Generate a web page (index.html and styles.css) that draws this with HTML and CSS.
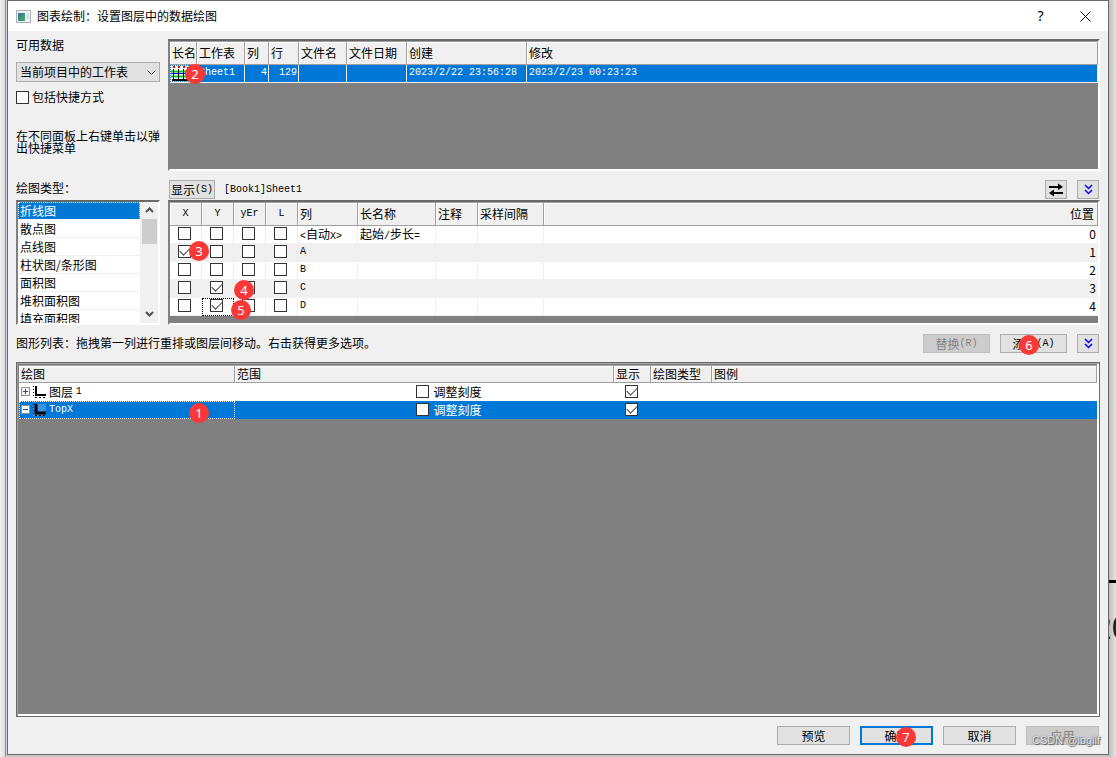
FILE: index.html
```html
<!DOCTYPE html>
<html lang="zh-CN">
<head>
<meta charset="utf-8">
<title>图表绘制：设置图层中的数据绘图</title>
<link rel="stylesheet" href="styles.css">
</head>
<body>
<div class="page-tick" aria-hidden="true"></div>
<div class="page-number" aria-hidden="true">20</div>
<main class="dialog">
  <header class="titlebar">
    <svg class="app-icon" width="15" height="13" viewBox="0 0 15 13"><defs><linearGradient id="g" x1="0" y1="0" x2="1" y2="1"><stop offset="0" stop-color="#3a6a9c"/><stop offset="1" stop-color="#45b26b"/></linearGradient></defs><rect x=".5" y=".5" width="14" height="12" fill="#eef1f4" stroke="#a9b3bb"/><rect x="2" y="3" width="7" height="8" fill="url(#g)"/><path d="M11 4h2M11 6h2M11 8h2" stroke="#bcc4ca"/></svg>
    <h1 class="title">图表绘制：设置图层中的数据绘图</h1>
    <button class="caption-btn" aria-label="帮助">?</button>
    <button class="caption-btn" aria-label="关闭"><svg width="11" height="11" viewBox="0 0 11 11"><path d="M.5 .5l10 10M10.5 .5l-10 10" stroke="#000" fill="none"/></svg></button>
  </header>
  <div class="content">
    <div class="grid">
      <section class="source">
        <label class="source-label" for="src">可用数据</label>
        <div class="combo">
          <select id="src" class="combo-select"><option>当前项目中的工作表</option></select>
          <svg class="combo-arrow" width="9" height="6" viewBox="0 0 9 6"><path d="M.5 .5l4 4 4-4" stroke="#555" fill="none"/></svg>
        </div>
        <label class="check-label"><input type="checkbox" class="check">包括快捷方式</label>
        <p class="hint">在不同面板上右键单击以弹出快捷菜单</p>
      </section>
      <section class="panel sheets">
        <table class="table">
          <colgroup><col class="w27"><col class="w48"><col class="w24"><col class="w30"><col class="w48"><col class="w60"><col class="w120"><col></colgroup>
          <thead><tr><th>长名</th><th>工作表</th><th>列</th><th>行</th><th>文件名</th><th>文件日期</th><th>创建</th><th>修改</th></tr></thead>
          <tbody><tr class="selected">
            <td class="icon-cell"><svg width="19" height="17" viewBox="0 0 19 17"><rect width="19" height="17" fill="#fff"/><path d="M2 15h17M18 2v14" stroke="#000" stroke-width="2"/><path d="M4 1v2M9 1v2M14 1v2" stroke="#e00" stroke-width="2"/><path d="M1 8.500h17" stroke="#00c"/><path d="M1 6.500h15M1 11.500h15" stroke="#00d020" stroke-width="2"/><path d="M3.500 4v10M8.500 4v10M13.500 4v10" stroke="#000"/><path d="M0 .5h19M0 16.500h19M.5 0v17" stroke="#0078d7" stroke-dasharray="1 1"/></svg><span class="badge badge-sheet">2</span></td>
            <td class="mono">Sheet1</td><td class="mono right">4</td><td class="mono right">129</td><td></td><td></td><td class="mono">2023/2/22 23:56:28</td><td class="mono">2023/2/23 00:23:23</td>
          </tr></tbody>
        </table>
      </section>
      <label class="type-label" for="types">绘图类型：</label>
      <div class="toolbar">
        <button class="btn btn-show">显示<span class="mono">(S)</span></button>
        <span class="mono path">[Book1]Sheet1</span>
        <button class="btn btn-icon" aria-label="交换"><svg width="16" height="14" viewBox="0 0 16 14"><path d="M1 3h9V.5L15 4l-5 3V5H1zM15 9H6V6.500L1 10l5 3.500V11h9z" fill="#000"/></svg></button>
        <button class="btn btn-icon" aria-label="展开"><svg width="9" height="11" viewBox="0 0 9 11"><path d="M1 1l3.500 3.500L8 1M1 6l3.500 3.500L8 6" stroke="#00f" stroke-width="1.500" fill="none"/></svg></button>
      </div>
      <div class="panel listbox">
        <select id="types" class="types" size="7">
          <option selected>折线图</option><option>散点图</option><option>点线图</option><option>柱状图/条形图</option><option>面积图</option><option>堆积面积图</option><option>填充面积图</option>
        </select>
        <div class="scrollbar">
          <svg width="9" height="16" viewBox="0 0 9 16"><path d="M1 10l3.500-3.500L8 10" stroke="#505050" stroke-width="2" fill="none"/></svg>
          <div class="thumb"></div>
          <svg width="9" height="17" viewBox="0 0 9 17"><path d="M1 6l3.500 3.500L8 6" stroke="#505050" stroke-width="2" fill="none"/></svg>
        </div>
      </div>
      <section class="panel columns">
        <table class="table striped">
          <colgroup><col class="w32"><col class="w32"><col class="w32"><col class="w32"><col class="w60"><col class="w78"><col class="w42"><col class="w66"><col></colgroup>
          <thead><tr><th class="mono center">X</th><th class="mono center">Y</th><th class="mono center">yEr</th><th class="mono center">L</th><th>列</th><th>长名称</th><th>注释</th><th>采样间隔</th><th class="right">位置</th></tr></thead>
          <tbody>
            <tr><td><input type="checkbox" class="check" aria-label="X 0"></td><td><input type="checkbox" class="check" aria-label="Y 0"></td><td><input type="checkbox" class="check" aria-label="yEr 0"></td><td><input type="checkbox" class="check" aria-label="L 0"></td><td><span class="mono">&lt;</span>自动<span class="mono">X&gt;</span></td><td>起始<span class="mono">/</span>步长<span class="mono">=</span></td><td></td><td></td><td class="right">0</td></tr>
            <tr><td><input type="checkbox" class="check" aria-label="X A" checked><span class="badge badge-x">3</span></td><td><input type="checkbox" class="check" aria-label="Y A"></td><td><input type="checkbox" class="check" aria-label="yEr A"></td><td><input type="checkbox" class="check" aria-label="L A"></td><td class="mono">A</td><td></td><td></td><td></td><td class="right">1</td></tr>
            <tr><td><input type="checkbox" class="check" aria-label="X B"></td><td><input type="checkbox" class="check" aria-label="Y B"></td><td><input type="checkbox" class="check" aria-label="yEr B"></td><td><input type="checkbox" class="check" aria-label="L B"></td><td class="mono">B</td><td></td><td></td><td></td><td class="right">2</td></tr>
            <tr><td><input type="checkbox" class="check" aria-label="X C"></td><td><input type="checkbox" class="check" aria-label="Y C" checked></td><td><input type="checkbox" class="check" aria-label="yEr C"><span class="badge badge-yc">4</span></td><td><input type="checkbox" class="check" aria-label="L C"></td><td class="mono">C</td><td></td><td></td><td></td><td class="right">3</td></tr>
            <tr><td><input type="checkbox" class="check" aria-label="X D"></td><td class="focus-dark"><input type="checkbox" class="check" aria-label="Y D" checked></td><td><input type="checkbox" class="check" aria-label="yEr D"><span class="badge badge-yd">5</span></td><td><input type="checkbox" class="check" aria-label="L D"></td><td class="mono">D</td><td></td><td></td><td></td><td class="right">4</td></tr>
          </tbody>
        </table>
      </section>
    </div>
    <div class="listbar">
      <p class="listbar-text">图形列表：拖拽第一列进行重排或图层间移动。右击获得更多选项。</p>
      <button class="btn btn-mid" disabled>替换<span class="mono">(R)</span></button>
      <button class="btn btn-mid">添加<span class="mono">(A)</span><span class="badge badge-add">6</span></button>
      <button class="btn btn-icon" aria-label="收起"><svg width="9" height="11" viewBox="0 0 9 11"><path d="M1 1l3.500 3.500L8 1M1 6l3.500 3.500L8 6" stroke="#00f" stroke-width="1.500" fill="none"/></svg></button>
    </div>
    <section class="panel plots">
      <table class="table tree">
        <colgroup><col class="w216"><col class="w379"><col class="w37"><col class="w61"><col></colgroup>
        <thead><tr><th>绘图</th><th>范围</th><th>显示</th><th>绘图类型</th><th>图例</th></tr></thead>
        <tbody>
          <tr>
            <td><div class="node"><button class="toggle" aria-label="展开图层 1"><svg width="9" height="9" viewBox="0 0 9 9"><rect x=".5" y=".5" width="8" height="8" fill="#f6f6f6" stroke="#919191"/><path d="M2 4.500h5M4.500 2v5" stroke="#2c4a9c"/></svg></button><svg class="layer-icon" width="13" height="12" viewBox="0 0 13 12"><path d="M.5 0v12" stroke="#000" stroke-dasharray="1 2"/><path d="M3 0v9h10" stroke="#000" stroke-width="2" fill="none"/><path d="M2 11.500h11" stroke="#000" stroke-dasharray="2 2"/></svg>图层&nbsp;<span class="mono">1</span></div></td>
            <td><label class="scale"><input type="checkbox" class="check">调整刻度</label></td><td><input type="checkbox" class="check" aria-label="显示图层 1" checked></td><td></td><td></td>
          </tr>
          <tr class="selected">
            <td class="focus-light"><div class="node"><button class="toggle" aria-label="折叠 TopX"><svg width="9" height="9" viewBox="0 0 9 9"><rect x=".5" y=".5" width="8" height="8" fill="#f6f6f6" stroke="#919191"/><path d="M2 4.500h5" stroke="#2c4a9c"/></svg></button><svg class="layer-icon" width="13" height="12" viewBox="0 0 13 12"><path d="M.5 0v12" stroke="#000" stroke-dasharray="1 2"/><path d="M3 0v9h10" stroke="#000" stroke-width="3" fill="none"/><path d="M2 11.500h11" stroke="#000" stroke-dasharray="2 2"/></svg><span class="mono">TopX</span></div><span class="badge badge-layer">1</span></td>
            <td><label class="scale"><input type="checkbox" class="check">调整刻度</label></td><td><input type="checkbox" class="check" aria-label="显示 TopX" checked></td><td></td><td></td>
          </tr>
        </tbody>
      </table>
    </section>
    <footer class="actions">
      <button class="btn btn-wide">预览</button>
      <button class="btn btn-wide btn-default">确定<span class="badge badge-ok">7</span></button>
      <button class="btn btn-wide">取消</button>
      <button class="btn btn-wide" disabled>应用</button>
      <span class="watermark">CSDN @lbgllf</span>
    </footer>
  </div>
</main>
</body>
</html>
```
FILE: styles.css
```css
* { box-sizing: border-box; }
body {
  margin: 0;
  min-height: 100vh;
  padding: 0 7px 2px;
  display: flex;
  position: relative;
  overflow: hidden;
  background: linear-gradient(90deg, #f0f0f0 0, #dcdcdc 5px, #8a8a90 5px, #8a8a90 6px, #d4d4e0 6px, #d4d4e0 7px, #c6c6c6 7px, #c6c6c6 calc(100% - 7px), #bdbdbd calc(100% - 7px), #e6e6e6 100%);
  font: 12px/16px "Noto Sans CJK SC", "Liberation Sans", sans-serif;
  color: #000;
}
button, select, input { font: inherit; color: inherit; margin: 0; }
p, h1 { margin: 0; font-size: 12px; font-weight: normal; }
svg { display: block; flex: none; }
.mono { font-family: "Liberation Mono", monospace; font-size: 10px; }
span.mono { line-height: 12px; }

.page-tick { position: absolute; right: 0; top: 580px; width: 8px; height: 3px; background: #000; }
.page-number { position: absolute; right: -14px; top: 608px; font: 33px/40px "Liberation Sans", sans-serif; color: #123; }

.dialog {
  flex: 1;
  min-width: 0;
  display: flex;
  flex-direction: column;
  position: relative;
  border: 1px solid #696969;
  background: #f0f0f0;
}
.titlebar { height: 30px; display: flex; align-items: center; padding-left: 8px; background: #fff; }
.title { flex: 1; padding-left: 6px; }
.caption-btn { width: 45px; height: 30px; padding: 0; border: 0; background: none; display: flex; align-items: center; justify-content: center; font: 14px/16px "Noto Sans", sans-serif; }

.content { flex: 1; display: flex; flex-direction: column; padding: 8px 8px 9px; }
.grid { display: grid; grid-template-columns: 144px minmax(0, 1fr); grid-template-rows: 132px 29px 125px; column-gap: 8px; }
.source { display: flex; flex-direction: column; }
.source-label { line-height: 12px; margin-bottom: 11px; }
.combo { position: relative; }
.combo-select { display: block; width: 100%; height: 20px; padding: 0 3px; appearance: none; border: 1px solid #adadad; border-radius: 0; background: #e1e1e1; line-height: 18px; }
.combo-arrow { position: absolute; right: 4px; top: 8px; }
.check-label { display: flex; align-items: center; gap: 3px; margin-top: 7px; }
.hint { margin-top: 25px; line-height: 12px; }
.check { appearance: none; flex: none; display: block; width: 13px; height: 13px; border: 1px solid #333; background: #fff; }
.check:checked::before { content: ""; display: block; width: 9px; height: 5px; margin: 1px; border: solid #444; border-width: 0 0 1px 1px; transform: rotate(-45deg); }

.panel { border: 2px solid; border-color: #696969 #fff #fff #808080; background: #808080; min-width: 0; }
.table { width: 100%; table-layout: fixed; border-collapse: separate; border-spacing: 0; }
.table th { height: 24px; padding: 0 0 0 2px; border-top: 1px solid #a0a0a0; border-right: 1px solid #a0a0a0; border-bottom: 1px solid #a0a0a0; background: #f0f0f0; box-shadow: inset 1px 1px #fff; font-weight: normal; text-align: left; white-space: nowrap; }
.table td { position: relative; height: 18px; padding: 0 0 0 2px; border-right: 1px solid #f0f0f0; border-bottom: 1px solid #f0f0f0; background: #fff; line-height: 16px; vertical-align: top; white-space: nowrap; }
.table .right { text-align: right; padding-right: 3px; }
.table td.right { padding-right: 1px; }
.table .center { text-align: center; padding: 0; }
.table .selected td { background: #0078d7; color: #fff; }
.sheets .icon-cell { padding: 0; }
.striped td .check { margin: 1px 0 0 6px; }
.striped tr:nth-child(even) td { background: #f0f0f0; }
.tree th { height: 18px; line-height: 14px; }
.tree td { border-color: #fff; }
.tree .selected td { border-color: #0078d7; }
.tree td > .check { margin: 2px 0 0 9px; }
.table td.focus-dark { outline: 1px dotted #000; outline-offset: -1px; }
.table td.focus-light { outline: 1px dotted #fff; outline-offset: -1px; }
.node { display: flex; align-items: center; height: 17px; }
.toggle { padding: 0; border: 0; background: none; margin-right: 3px; }
.layer-icon { margin-right: 3px; }
.tree .selected .layer-icon { background: #3b93de; }
.scale { display: flex; align-items: center; justify-content: center; gap: 4px; height: 17px; padding-left: 48px; }

.w24 { width: 24px; } .w27 { width: 27px; } .w30 { width: 30px; } .w32 { width: 32px; }
.w37 { width: 37px; } .w42 { width: 42px; } .w48 { width: 48px; } .w60 { width: 60px; }
.w61 { width: 61px; } .w66 { width: 66px; } .w78 { width: 78px; } .w120 { width: 120px; }
.w216 { width: 216px; } .w379 { width: 379px; }

.type-label { align-self: end; margin-bottom: 4px; }
.toolbar { display: flex; align-items: center; padding: 9px 1px 1px; }
.path { flex: 1; padding-left: 9px; }
.btn { position: relative; height: 19px; padding: 0; border: 1px solid #adadad; background: #e1e1e1; display: flex; align-items: center; justify-content: center; line-height: 16px; }
.btn:disabled { background: #ccc; border-color: #bfbfbf; color: #838383; }
.btn-show { width: 46px; }
.btn-icon { width: 22px; margin-left: 10px; }
.btn-mid { width: 67px; margin-left: 10px; }
.btn-wide { width: 73px; }
.btn-default { border: 2px solid #0078d7; }

.listbox { display: flex; background: #fff; overflow: hidden; }
.types { flex: 1; min-width: 0; height: 121px; padding: 0; border: 0; border-radius: 0; outline: 0; background: #fff; overflow: hidden; scrollbar-width: none; }
.types option { height: 18px; min-height: 18px; padding: 0 2px 2px; border-bottom: 1px solid #f0f0f0; line-height: 15px; }
.types option:checked { background: #0078d7 linear-gradient(#0078d7, #0078d7); color: #fff; outline: 1px dotted #fff; outline-offset: -1px; }
.scrollbar { width: 18px; display: flex; flex-direction: column; align-items: center; background: #f0f0f0; }
.thumb { width: 15px; height: 25px; margin: 1px 0 auto; background: #cdcdcd; }

.listbar { display: flex; align-items: center; padding: 9px 1px 9px 0; }
.listbar-text { flex: 1; margin-bottom: 2px; }
.plots { flex: 1; min-height: 120px; border: 1px solid #696969; padding: 2px; background: #808080; box-shadow: inset 1px 1px #a0a0a0, inset -2px -2px #fff; }
.actions { position: relative; display: flex; justify-content: flex-end; gap: 10px; padding: 9px 1px 0 0; }
.watermark { position: absolute; right: 0; top: 15px; font: 11px/16px "Liberation Sans", sans-serif; color: #e8e8e8; text-shadow: 1px 1px 1px #555, 0 0 1px #666; }

.badge { position: absolute; z-index: 2; width: 20px; height: 20px; border-radius: 50%; background: #fb3838; color: #fff; text-align: center; font: 13px/20px "Noto Sans", sans-serif; }
.badge-sheet { left: 15px; top: -1px; }
.badge-x { left: 19px; top: -3px; }
.badge-yc { left: 0; top: 0; }
.badge-yd { left: -3px; top: 2px; }
.badge-layer { left: 170px; top: 2px; }
.badge-add { left: 18px; top: 0; }
.badge-ok { left: 34px; top: -1px; }
```
